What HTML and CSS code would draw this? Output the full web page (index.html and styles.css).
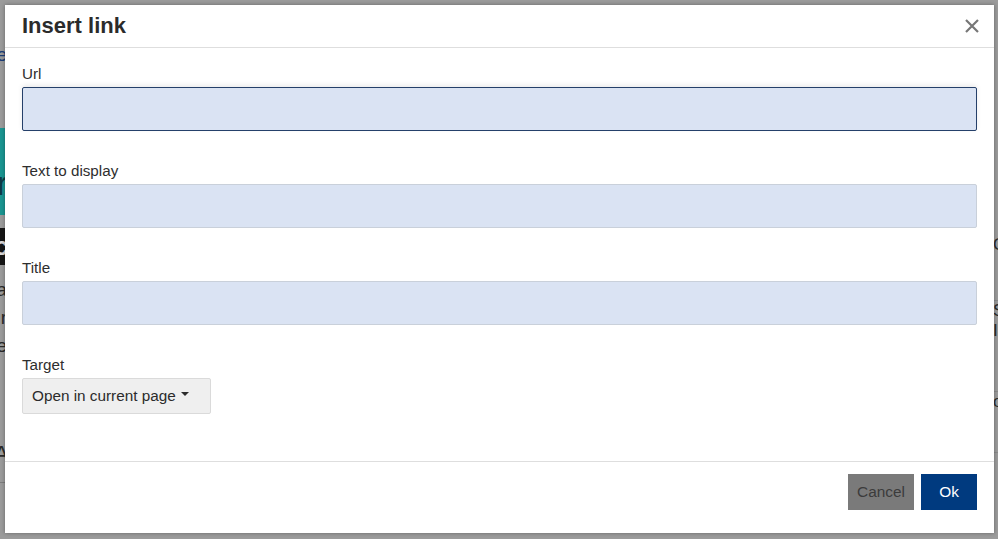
FILE: index.html
```html
<!DOCTYPE html>
<html>
<head>
<meta charset="utf-8">
<title>Insert link</title>
<link rel="stylesheet" href="styles.css">
</head>
<body>
<div class="page">
  <div class="page-left">
    <div class="pl-gap h45"></div>
    <div class="pl-text blue h20">e</div>
    <div class="pl-gap h63"></div>
    <div class="pl-teal">r</div>
    <div class="pl-gap h13"></div>
    <div class="pl-black">c</div>
    <div class="pl-gap h15"></div>
    <div class="pl-text h28">a</div>
    <div class="pl-text h28">r</div>
    <div class="pl-text h28">e</div>
    <div class="pl-gap h80"></div>
    <div class="pl-text big h30">A</div>
    <div class="pl-line"></div>
  </div>
  <div class="page-spacer"></div>
  <div class="page-right">
    <div class="pl-gap h235"></div>
    <div class="pr-text h20">C</div>
    <div class="pr-row h45"></div>
    <div class="pr-text h20">S</div>
    <div class="pr-text h20">I</div>
    <div class="pr-row h50"></div>
    <div class="pr-text h20">o</div>
    <div class="pr-row h40"></div>
  </div>
</div>

<div class="dialog">
  <div class="dialog-header">
    <h1 class="dialog-title">Insert link</h1>
    <button class="close-btn" aria-label="Close">
      <svg width="14" height="14" viewBox="0 0 14 14"><path d="M1 1 L13 13 M13 1 L1 13" stroke="#777" stroke-width="2.2" fill="none"/></svg>
    </button>
  </div>
  <div class="dialog-body">
    <div class="field">
      <label class="field-label">Url</label>
      <input class="field-input focused" type="text">
    </div>
    <div class="field">
      <label class="field-label">Text to display</label>
      <input class="field-input" type="text">
    </div>
    <div class="field">
      <label class="field-label">Title</label>
      <input class="field-input" type="text">
    </div>
    <div class="field">
      <label class="field-label">Target</label>
      <button class="dropdown">Open in current page <span class="caret"></span></button>
    </div>
  </div>
  <div class="dialog-footer">
    <button class="btn btn-cancel">Cancel</button>
    <button class="btn btn-ok">Ok</button>
  </div>
</div>
</body>
</html>
```
FILE: styles.css
```css
html, body {
  margin: 0;
  padding: 0;
}
body {
  width: 998px;
  height: 539px;
  overflow: hidden;
  background: #9b9b9b;
  font-family: "Liberation Sans", Arial, sans-serif;
  position: relative;
}

/* background page (dimmed) */
.page {
  display: flex;
  height: 539px;
}
.page-left {
  width: 14px;
  margin-left: -6px;
  display: flex;
  flex-direction: column;
}
.page-spacer { flex: 1; }
.page-right {
  width: 14px;
  margin-right: -9px;
  display: flex;
  flex-direction: column;
}
.pl-gap { flex: none; }
.h13 { height: 13px; }
.h15 { height: 15px; }
.h20 { height: 20px; }
.h28 { height: 28px; }
.h30 { height: 30px; }
.h40 { height: 40px; }
.h45 { height: 45px; }
.h50 { height: 50px; }
.h63 { height: 63px; }
.h80 { height: 80px; }
.h235 { height: 235px; }
.pl-text {
  text-align: right;
  font-size: 19px;
  line-height: 20px;
  color: #2a2a2a;
  white-space: nowrap;
  padding-right: 1px;
}
.pl-text.blue { color: #1c3e78; }
.pl-text.big { font-size: 22px; }
.pl-teal {
  height: 87px;
  background: #1a9591;
  color: #0e3a45;
  text-align: right;
  font-size: 34px;
  line-height: 110px;
  white-space: nowrap;
  overflow: hidden;
}
.pl-black {
  height: 37px;
  background: #161616;
  color: #d9d9d9;
  text-align: right;
  font-size: 26px;
  font-weight: bold;
  line-height: 37px;
  white-space: nowrap;
  overflow: hidden;
}
.pl-line {
  margin-top: 8px;
  height: 1px;
  background: #7d7d7d;
}
.pr-text {
  font-size: 17px;
  line-height: 20px;
  color: #2a2a2a;
  white-space: nowrap;
}
.pr-row {
  border-bottom: 1px solid #8a8a8a;
}

/* dialog */
.dialog {
  position: absolute;
  top: 5px;
  left: 5px;
  width: 989px;
  height: 528px;
  background: #fff;
  box-shadow: 0 0 4px rgba(0, 0, 0, 0.35);
  display: flex;
  flex-direction: column;
}
.dialog-header {
  height: 42px;
  flex: none;
  border-bottom: 1px solid #dedede;
  display: flex;
  align-items: center;
  justify-content: space-between;
  padding: 0 15px 0 17px;
}
.dialog-title {
  margin: 0;
  font-size: 22px;
  font-weight: bold;
  color: #2b2b2b;
  line-height: 26px;
}
.close-btn {
  border: none;
  background: none;
  padding: 0;
  width: 14px;
  height: 14px;
  display: flex;
  cursor: pointer;
}
.dialog-body {
  flex: 1;
  padding: 16px 17px 0;
  display: flex;
  flex-direction: column;
}
.field {
  display: flex;
  flex-direction: column;
  margin-bottom: 30px;
}
.field-label {
  font-size: 15.2px;
  line-height: 20px;
  color: #2e2e2e;
  margin-bottom: 3px;
}
.field-input {
  box-sizing: border-box;
  height: 44px;
  width: 100%;
  margin: 0;
  background: #dae3f3;
  border: 1px solid #c9d0da;
  border-radius: 2px;
  font-family: inherit;
  font-size: 15px;
  padding: 0 10px;
  outline: none;
}
.field-input.focused {
  border-color: #25406a;
  box-shadow: 0 -2px 5px rgba(0, 0, 0, 0.08);
}
.dropdown {
  align-self: flex-start;
  box-sizing: border-box;
  height: 36px;
  width: 189px;
  background: #efefef;
  border: 1px solid #dadada;
  border-radius: 2px;
  font-family: inherit;
  font-size: 15.3px;
  color: #2b2b2b;
  text-align: left;
  padding: 0 0 0 9px;
  display: flex;
  align-items: center;
  gap: 5px;
}
.caret {
  width: 0;
  height: 0;
  border-left: 4px solid transparent;
  border-right: 4px solid transparent;
  border-top: 4.5px solid #2b2b2b;
  margin-top: -4px;
}
.dialog-footer {
  flex: none;
  border-top: 1px solid #dedede;
  padding: 12px 17px 23px;
  display: flex;
  justify-content: flex-end;
  gap: 7px;
}
.btn {
  height: 36px;
  border: none;
  border-radius: 0;
  font-family: inherit;
  font-size: 15.4px;
  padding: 0;
}
.btn-cancel {
  width: 66px;
  background: #7a7a7a;
  color: #3c3c3c;
}
.btn-ok {
  width: 56px;
  background: #003a7f;
  color: #fff;
}
```
